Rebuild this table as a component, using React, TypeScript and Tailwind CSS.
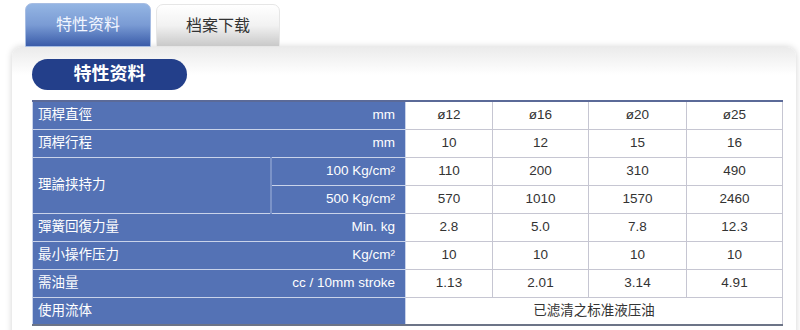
const rows: { label: string; unit: string; values: string[] }[] = [
  { label: "頂桿直徑", unit: "mm", values: ["ø12", "ø16", "ø20", "ø25"] },
  { label: "頂桿行程", unit: "mm", values: ["10", "12", "15", "16"] },
];

const rows2: { label: string; unit: string; values: string[] }[] = [
  { label: "彈簧回復力量", unit: "Min. kg", values: ["2.8", "5.0", "7.8", "12.3"] },
  { label: "最小操作压力", unit: "Kg/cm²", values: ["10", "10", "10", "10"] },
  { label: "需油量", unit: "cc / 10mm stroke", values: ["1.13", "2.01", "3.14", "4.91"] },
];

const blue = "bg-[#5472b5] text-white border border-[#c9d3ea] h-[28px] p-0";
const val = "bg-white text-[#333] border border-[#c6c6d2] text-center h-[28px] p-0";

const LabelRow = ({ label, unit, values }: { label: string; unit: string; values: string[] }) => (
  <tr>
    <td colSpan={2} className={blue}>
      <div className="flex justify-between pl-[5px] pr-[10px]">
        <span>{label}</span>
        <span>{unit}</span>
      </div>
    </td>
    {values.map((v, i) => (
      <td key={i} className={val}>{v}</td>
    ))}
  </tr>
);

export default function App() {
  return (
    <div
      className="w-[800px] h-[330px] bg-white overflow-hidden text-[13.5px]"
      style={{ fontFamily: '"Liberation Sans", "Noto Sans CJK SC", sans-serif' }}
    >
      <div className="flex gap-[5px] pl-[25px] pt-[3px] h-[47px] items-end">
        <div className="w-[126px] h-[44px] rounded-t-[7px] border border-[#a7bde3] bg-linear-to-b from-[#94b5e3] via-[#7a9bd4] to-[#3b5ca9] text-[#f2f6ff] text-[16px] flex items-center justify-center">
          特性资料
        </div>
        <div className="w-[124px] h-[43px] rounded-t-[7px] border border-[#e6e6e6] bg-linear-to-b from-white via-[#f2f2f2] to-[#c9c9c9] text-[#333] text-[16px] flex items-center justify-center">
          档案下载
        </div>
      </div>
      <div className="ml-[12px] mr-[4px] h-[290px] rounded-t-[9px] shadow-[0_0_7px_rgba(0,0,0,0.18)] bg-[linear-gradient(to_bottom,#ebebeb,#ffffff_28px)] pt-[12px] pl-[20px]">
        <div className="w-[155px] h-[31px] rounded-full bg-[#233f8a] text-white font-bold text-[18px] flex items-center justify-center">
          特性资料
        </div>
        <table className="mt-[10px] w-[750px] border-collapse table-fixed border-t-2 border-t-[#5b6a98] border-b-2 border-b-[#6c7487]">
          <colgroup>
            <col className="w-[238px]" />
            <col className="w-[135px]" />
            <col className="w-[87px]" />
            <col className="w-[96px]" />
            <col className="w-[98px]" />
            <col className="w-[96px]" />
          </colgroup>
          <tbody>
            {rows.map((r) => (
              <LabelRow key={r.label} {...r} />
            ))}
            <tr>
              <td rowSpan={2} className={`${blue} border-r-2 border-r-[#7b93c8] pl-[5px]`}>
                理論挟持力
              </td>
              <td className={`${blue} text-right pr-[10px]`}>100 Kg/cm²</td>
              {["110", "200", "310", "490"].map((v) => (
                <td key={v} className={val}>{v}</td>
              ))}
            </tr>
            <tr>
              <td className={`${blue} text-right pr-[10px]`}>500 Kg/cm²</td>
              {["570", "1010", "1570", "2460"].map((v) => (
                <td key={v} className={val}>{v}</td>
              ))}
            </tr>
            {rows2.map((r) => (
              <LabelRow key={r.label} {...r} />
            ))}
            <tr>
              <td colSpan={2} className={`${blue} pl-[5px]`}>使用流体</td>
              <td colSpan={4} className={val}>已滤清之标准液压油</td>
            </tr>
          </tbody>
        </table>
      </div>
    </div>
  );
}
